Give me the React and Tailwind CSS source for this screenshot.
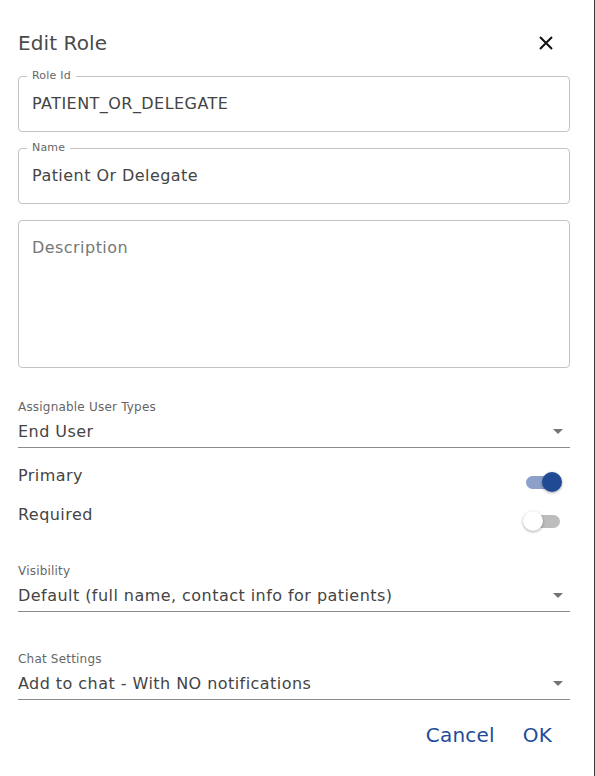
import React from 'react';

const font = { fontFamily: '"DejaVu Sans", "Noto Sans", sans-serif' };

const OutlinedField = ({ label, value, className = 'h-[56px] items-center' }) => (
  <div className={`relative flex rounded-[4px] border border-[#c4c4c4] px-[13px] ${className}`}>
    {label && (
      <span className="absolute -top-[8px] left-[8px] bg-white px-[5px] text-[11px] leading-[14px] tracking-[0.2px] text-[#666]">
        {label}
      </span>
    )}
    {value}
  </div>
);

const Caret = () => (
  <svg width="10" height="5" viewBox="0 0 10 5" className="mr-[7px]">
    <path d="M0 0h10L5 5z" fill="#757575" />
  </svg>
);

const SelectField = ({ label, value }) => (
  <div className="flex flex-col">
    <span className="text-[12px] leading-[16px] tracking-[0.2px] text-[#666]">{label}</span>
    <div className="mt-[4px] flex h-[29px] items-center justify-between border-b border-[#8a8a8a] pb-[3px]">
      <span className="text-[16px] tracking-[0.45px] text-[#444]">{value}</span>
      <Caret />
    </div>
  </div>
);

const Switch = ({ on }) => (
  <div className="relative mr-[9px] h-[20px] w-[38px]">
    <div className={`absolute left-[3px] top-[4px] h-[13px] w-[34px] rounded-full ${on ? 'bg-[#8ca0c9]' : 'bg-[#bdbdbd]'}`} />
    <div
      className={`absolute top-0 h-[20px] w-[20px] rounded-full shadow-[0_1px_3px_rgba(0,0,0,0.35)] ${
        on ? 'left-[19px] bg-[#204a94]' : 'left-0 bg-white'
      }`}
    />
  </div>
);

export default function App() {
  return (
    <div className="flex h-[776px] w-[595px] bg-[#3a3a3a]" style={font}>
      <div className="flex w-[594px] flex-col bg-white pl-[18px] pr-[24px]">
        {/* Header */}
        <div className="mt-[27px] flex h-[32px] items-center justify-between">
          <h2 className="text-[20px] font-medium tracking-[0.1px] text-[#4a4a4a]">Edit Role</h2>
          <svg width="14" height="14" viewBox="0 0 14 14" className="mr-[17px]">
            <path d="M1 1l12 12M13 1L1 13" stroke="#111" strokeWidth="2" />
          </svg>
        </div>

        {/* Text fields */}
        <div className="mt-[17px] flex flex-col gap-[16px]">
          <OutlinedField
            label="Role Id"
            value={<span className="text-[16px] tracking-[0.45px] text-[#444]">PATIENT_OR_DELEGATE</span>}
          />
          <OutlinedField
            label="Name"
            value={<span className="text-[16px] tracking-[0.45px] text-[#444]">Patient Or Delegate</span>}
          />
          <OutlinedField
            className="h-[148px] items-start pt-[15px]"
            value={<span className="text-[16px] tracking-[0.45px] text-[#777]">Description</span>}
          />
        </div>

        {/* Assignable user types */}
        <div className="mt-[31px]">
          <SelectField label="Assignable User Types" value="End User" />
        </div>

        {/* Toggles */}
        <div className="mt-[11px] flex items-center justify-between">
          <span className="text-[16px] tracking-[0.45px] text-[#444]">Primary</span>
          <div className="mt-[13px]">
            <Switch on />
          </div>
        </div>
        <div className="mt-[6px] flex items-center justify-between">
          <span className="text-[16px] tracking-[0.45px] text-[#444]">Required</span>
          <div className="mt-[13px]">
            <Switch />
          </div>
        </div>

        <div className="mt-[32px]">
          <SelectField label="Visibility" value="Default (full name, contact info for patients)" />
        </div>

        <div className="mt-[39px]">
          <SelectField label="Chat Settings" value="Add to chat - With NO notifications" />
        </div>

        {/* Actions */}
        <div className="mt-[20px] flex justify-end gap-[28px] pr-[18px]">
          <button className="text-[20px] tracking-[0.2px] text-[#1f4b99]">Cancel</button>
          <button className="text-[20px] tracking-[0.2px] text-[#1f4b99]">OK</button>
        </div>
      </div>
    </div>
  );
}
